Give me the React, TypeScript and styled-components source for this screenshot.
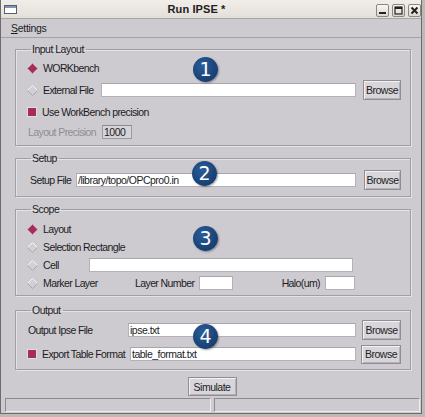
import React from 'react';
import styled, { createGlobalStyle } from 'styled-components';

const GlobalStyle = createGlobalStyle`
  html, body { margin: 0; padding: 0; }
  body {
    font-family: "Liberation Sans", Arial, sans-serif;
    font-size: 10.5px;
    color: #1c1c1e;
  }
`;

const Desktop = styled.div`
  width: 425px;
  height: 417px;
  background: #bdbab6;
  overflow: hidden;
`;

const Window = styled.div`
  box-sizing: border-box;
  width: 422px;
  height: 414px;
  background: #cecbd0;
  border: 1px solid #6d6b6f;
  border-top: none;
  display: flex;
  flex-direction: column;
`;

const TitleBar = styled.div`
  height: 18px;
  flex: none;
  display: flex;
  align-items: flex-start;
  background: linear-gradient(#f1eee9, #e3dfd9);
  border-bottom: 1px solid #a9a6a2;
`;

const WinIcon = styled.svg`
  margin: 5px 0 0 3px;
  flex: none;
`;

const Title = styled.div`
  flex: 1;
  text-align: center;
  font-weight: bold;
  font-size: 11px;
  line-height: 18px;
  letter-spacing: 0.1px;
  color: #202020;
`;

const TitleButtons = styled.div`
  display: flex;
  gap: 3px;
  padding-top: 4px;
`;

const TitleButton = styled.div`
  box-sizing: border-box;
  width: 13px;
  height: 13px;
  border: 1px solid #8a8782;
  border-radius: 2px;
  background: linear-gradient(#f8f6f3, #dcd8d2);
  display: flex;
  align-items: center;
  justify-content: center;
`;

const MenuBar = styled.div`
  height: 18px;
  flex: none;
  display: flex;
  align-items: center;
  padding-left: 10px;
  border-bottom: 1px solid #a3a1a6;
  font-size: 10.5px;
  letter-spacing: -0.3px;
  u { text-decoration: underline; }
`;

const Content = styled.div`
  flex: 1;
  display: flex;
  flex-direction: column;
  padding: 5px 10px 0 14px;
`;

const Group = styled.fieldset<{ $mt?: number }>`
  margin: ${(p) => p.$mt ?? 0}px 0 0 0;
  padding: 0;
  min-width: 0;
  border: 1px solid #a19fa4;
  box-shadow: inset 1px 1px 0 #e4e2e6, 1px 1px 0 #e4e2e6;
`;

const Legend = styled.legend`
  margin-left: 15px;
  padding: 0 2px 0 1px;
  font-size: 10.5px;
  line-height: 12px;
  letter-spacing: -0.5px;
`;

const Stack = styled.div<{ $pt: number; $pb: number; $gap: number }>`
  position: relative;
  display: flex;
  flex-direction: column;
  gap: ${(p) => p.$gap}px;
  padding: ${(p) => p.$pt}px 9px ${(p) => p.$pb}px 11px;
`;

const Row = styled.div<{ $h: number }>`
  height: ${(p) => p.$h}px;
  display: flex;
  align-items: center;
`;

const Label = styled.span<{ $w?: number; $dim?: boolean; $right?: boolean }>`
  flex: none;
  box-sizing: border-box;
  width: ${(p) => (p.$w ? `${p.$w}px` : 'auto')};
  color: ${(p) => (p.$dim ? '#8f8d92' : '#1c1c1e')};
  text-align: ${(p) => (p.$right ? 'right' : 'left')};
  padding-right: ${(p) => (p.$right ? 5 : 0)}px;
  letter-spacing: -0.6px;
  white-space: nowrap;
`;

const Field = styled.div<{ $w?: number; $disabled?: boolean }>`
  box-sizing: border-box;
  height: 14px;
  ${(p) => (p.$w ? `width: ${p.$w}px; flex: none;` : 'flex: 1;')}
  background: ${(p) => (p.$disabled ? '#d6d4d8' : '#ffffff')};
  border: 1px solid ${(p) => (p.$disabled ? '#9c9a9f' : '#b4b2b7')};
  border-top-color: ${(p) => (p.$disabled ? '#8a888d' : '#a8a6ab')};
  padding-left: 1px;
  line-height: 12px;
  font-size: 10.5px;
  letter-spacing: -0.5px;
  white-space: nowrap;
  overflow: hidden;
`;

const Button = styled.div<{ $w: number; $h: number }>`
  box-sizing: border-box;
  flex: none;
  width: ${(p) => p.$w}px;
  height: ${(p) => p.$h}px;
  background: #d8d6da;
  border: 1px solid #908e93;
  box-shadow: inset 1px 1px 0 #f3f1f5, inset -1px -1px 0 #b3b1b6;
  display: flex;
  align-items: center;
  justify-content: center;
  font-size: 10.5px;
  letter-spacing: -0.5px;
  color: #222;
`;

const Spacer = styled.div<{ $w: number }>`
  flex: none;
  width: ${(p) => p.$w}px;
`;

const Check = styled.div`
  box-sizing: border-box;
  flex: none;
  width: 10px;
  height: 10px;
  background: #a62d5a;
  border: 1px solid #e2dde2;
  margin: 0 5px 0 0;
`;

const Badge = styled.div<{ $x: number; $y: number }>`
  position: absolute;
  left: ${(p) => p.$x}px;
  top: ${(p) => p.$y}px;
  width: 25px;
  height: 25px;
  border-radius: 50%;
  background: radial-gradient(circle at 40% 35%, #2b5d98, #173f72 70%);
  box-shadow: 1px 1px 2px rgba(0, 0, 0, 0.35);
  color: #fff;
  font-size: 19px;
  line-height: 25px;
  text-align: center;
  font-family: "DejaVu Sans", "Liberation Sans", sans-serif;
`;

const Footer = styled.div`
  display: flex;
  justify-content: center;
  margin-top: 7px;
  padding-right: 2px;
`;

const StatusBar = styled.div`
  margin-top: auto;
  display: flex;
  gap: 3px;
  padding: 0 1px 1px 4px;
  height: 14px;
`;

const StatusPane = styled.div<{ $w?: number }>`
  box-sizing: border-box;
  ${(p) => (p.$w ? `width: ${p.$w}px; flex: none;` : 'flex: 1;')}
  border: 1px solid;
  border-color: #8c8a8f #eeecf0 #eeecf0 #8c8a8f;
`;

const Diamond = ({ on }: { on?: boolean }) => (
  <svg width="11" height="11" viewBox="0 0 11 11" style={{ flex: 'none', marginRight: 5 }}>
    {on ? (
      <polygon points="5.5,0.5 10.5,5.5 5.5,10.5 0.5,5.5" fill="#a62d5a" stroke="#c98aa5" strokeWidth="0.8" />
    ) : (
      <>
        <polygon points="5.5,0.5 10.5,5.5 5.5,10.5 0.5,5.5" fill="#d2d0d4" />
        <polyline points="0.5,5.5 5.5,0.5 10.5,5.5" fill="none" stroke="#f4f3f6" strokeWidth="1" />
        <polyline points="0.5,5.5 5.5,10.5 10.5,5.5" fill="none" stroke="#a9a7ac" strokeWidth="1" />
      </>
    )}
  </svg>
);

export default function App() {
  return (
    <Desktop>
      <GlobalStyle />
      <Window>
        <TitleBar>
          <WinIcon width="13" height="9" viewBox="0 0 13 9">
            <rect x="0.5" y="0.5" width="12" height="8" fill="#ffffff" stroke="#55606e" />
            <rect x="1" y="1" width="11" height="2" fill="#8096b4" />
          </WinIcon>
          <Title>Run IPSE *</Title>
          <TitleButtons>
            <TitleButton>
              <svg width="9" height="9" viewBox="0 0 9 9">
                <rect x="1" y="6" width="7" height="2" fill="#222" />
              </svg>
            </TitleButton>
            <TitleButton>
              <svg width="9" height="9" viewBox="0 0 9 9">
                <rect x="1" y="1" width="7" height="7" fill="none" stroke="#222" strokeWidth="1.2" />
                <rect x="1" y="1" width="7" height="2" fill="#222" />
              </svg>
            </TitleButton>
            <TitleButton>
              <svg width="9" height="9" viewBox="0 0 9 9">
                <path d="M1.5 1.5 L7.5 7.5 M7.5 1.5 L1.5 7.5" stroke="#222" strokeWidth="2" />
              </svg>
            </TitleButton>
          </TitleButtons>
        </TitleBar>
        <MenuBar>
          <span>
            <u>S</u>ettings
          </span>
        </MenuBar>
        <Content>
          <Group>
            <Legend>Input Layout</Legend>
            <Stack $pt={4} $pb={5} $gap={3}>
              <Badge $x={177} $y={2}>1</Badge>
              <Row $h={18}>
                <Diamond on />
                <Label>WORKbench</Label>
              </Row>
              <Row $h={20}>
                <Diamond />
                <Label $w={58}>External File</Label>
                <Field />
                <Spacer $w={7} />
                <Button $w={38} $h={20}>Browse</Button>
              </Row>
              <Row $h={18}>
                <Check />
                <Label>Use WorkBench precision</Label>
              </Row>
              <Row $h={16}>
                <Spacer $w={1} />
                <Label $w={74} $dim>Layout Precision</Label>
                <Field $w={30} $disabled>1000</Field>
              </Row>
            </Stack>
          </Group>

          <Group $mt={6}>
            <Legend>Setup</Legend>
            <Stack $pt={6} $pb={6} $gap={0}>
              <Badge $x={176} $y={-3}>2</Badge>
              <Row $h={20}>
                <Spacer $w={3} />
                <Label $w={46}>Setup File</Label>
                <Field>/library/topo/OPCpro0.in</Field>
                <Spacer $w={8} />
                <Button $w={37} $h={20}>Browse</Button>
              </Row>
            </Stack>
          </Group>

          <Group $mt={6}>
            <Legend>Scope</Legend>
            <Stack $pt={5} $pb={3} $gap={0}>
              <Badge $x={177} $y={11}>3</Badge>
              <Row $h={18}>
                <Diamond on />
                <Label>Layout</Label>
              </Row>
              <Row $h={18}>
                <Diamond />
                <Label>Selection Rectangle</Label>
              </Row>
              <Row $h={18}>
                <Diamond />
                <Label $w={46}>Cell</Label>
                <Field $w={264} />
              </Row>
              <Row $h={18}>
                <Diamond />
                <Label $w={92}>Marker Layer</Label>
                <Label $w={64}>Layer Number</Label>
                <Field $w={34} />
                <Label $w={92} $right>Halo(um)</Label>
                <Field $w={30} />
              </Row>
            </Stack>
          </Group>

          <Group $mt={8}>
            <Legend>Output</Legend>
            <Stack $pt={4} $pb={5} $gap={4}>
              <Badge $x={177} $y={8}>4</Badge>
              <Row $h={20}>
                <Spacer $w={1} />
                <Label $w={100}>Output Ipse File</Label>
                <Field>ipse.txt</Field>
                <Spacer $w={6} />
                <Button $w={39} $h={20}>Browse</Button>
              </Row>
              <Row $h={20}>
                <Check />
                <Label $w={88}>Export Table Format</Label>
                <Field>table_format.txt</Field>
                <Spacer $w={5} />
                <Button $w={40} $h={19}>Browse</Button>
              </Row>
            </Stack>
          </Group>

          <Footer>
            <Button $w={49} $h={19}>Simulate</Button>
          </Footer>
        </Content>
        <StatusBar>
          <StatusPane $w={206} />
          <StatusPane />
        </StatusBar>
      </Window>
    </Desktop>
  );
}
